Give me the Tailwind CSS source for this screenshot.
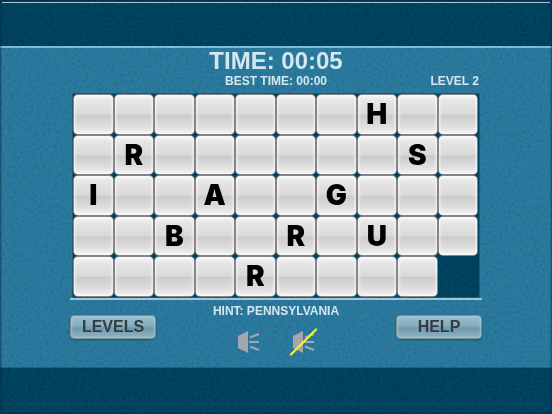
<!DOCTYPE html>
<html lang="en">
<head>
    <meta charset="UTF-8">
    <meta name="viewport" content="width=device-width, initial-scale=1.0">
    <title>Word Slide</title>
    <script src="https://cdn.jsdelivr.net/npm/@tailwindcss/browser@4"></script>
    <style>
        body {
            font-family: 'Liberation Sans', Arial, sans-serif;
        }
        /* Raised key with a darker band across the middle */
        .tile {
            background: linear-gradient(#f4f4f4 0%, #e4e4e4 18%, #d9d9d9 49%, #cbcbcb 53%, #dcdcdc 78%, #f2f2f2 100%);
            box-shadow: inset 0 0 3px 1px rgba(255, 255, 255, 0.8), 0 0 0 1px #858585;
            font-family: 'Inter', 'Open Sans', sans-serif;
        }
        .key {
            background: linear-gradient(#9bbfcd 0%, #86adbd 45%, #7199ab 55%, #8db5c5 100%);
            box-shadow: inset 0 0 2px 1px rgba(190, 220, 230, 0.5), 0 1px 2px rgba(0, 40, 60, 0.4);
        }
    </style>
</head>

<body class="relative min-h-screen flex flex-col bg-[#27759a] text-[#d3e6ef] font-bold">
    <header class="h-12 shrink-0 bg-[#003f5c] border-b-2 border-[#80b9cf] pt-[2px]">
        <div class="h-px mx-[2px] bg-[#b4cdd9]"></div>
    </header>

    <main class="grow w-full max-w-[412px] mx-auto flex flex-col">
        <h1 class="text-center text-[24px] leading-[26px]">TIME: 00:05</h1>
        <div class="grid grid-cols-[1fr_auto_1fr] px-[3px] text-[12px] leading-[14px]">
            <p class="col-start-2">BEST TIME: 00:00</p>
            <p class="text-right">LEVEL 2</p>
        </div>

        <div class="mt-[5px] mx-[2px] p-px pr-[2px] bg-[#003f5c] border border-[#2b5568]">
            <div id="board" class="grid grid-cols-10 gap-[2px] leading-none text-black"></div>
        </div>
        <div class="h-[2px] bg-[#9ac8da]"></div>

        <div class="flex justify-between">
            <button class="key relative z-10 mt-[15px] h-6 w-[86px] rounded-[4px] border border-[#7d8d94] text-[16px] leading-[22px] text-[#333c41]">LEVELS</button>
            <div class="pt-[4px] text-center">
                <p class="text-[12px] leading-[14px]">HINT: PENNSYLVANIA</p>
                <div class="mt-[10px] flex justify-center gap-[26px]">
                    <button class="relative z-10" aria-label="Sound on">
                        <svg class="block" width="28" height="28" viewBox="0 0 28 28">
                            <path d="M3 8 L13 3 V25 L3 20 Z" fill="#a3a6ae"/>
                            <path d="M15 9.5 L24 6 M14 14 H24 M15 18.5 L24 22" stroke="#a3a6ae" stroke-width="2"/>
                        </svg>
                    </button>
                    <button class="relative z-10" aria-label="Sound off">
                        <svg class="block" width="28" height="28" viewBox="0 0 28 28">
                            <path d="M4 8 L14 3 V25 L4 20 Z" fill="#a3a6ae"/>
                            <path d="M16 9.5 L25 6 M15 14 H25 M16 18.5 L25 22" stroke="#a3a6ae" stroke-width="2"/>
                            <path d="M2 26.5 L27 1.5" stroke="#fff31c" stroke-width="2.2" stroke-linecap="round"/>
                        </svg>
                    </button>
                </div>
            </div>
            <button class="key relative z-10 mt-[15px] h-6 w-[86px] rounded-[4px] border border-[#7d8d94] text-[16px] leading-[22px] text-[#333c41]">HELP</button>
        </div>
    </main>

    <footer class="h-[47px] shrink-0 bg-[#003f5c] border-t border-[#1b5f80]"></footer>

    <!-- Felt texture and the dark rim over the whole screen -->
    <svg class="absolute inset-0 w-full h-full pointer-events-none opacity-10 mix-blend-soft-light" aria-hidden="true">
        <filter id="grain" x="0" y="0" width="100%" height="100%">
            <feTurbulence type="fractalNoise" baseFrequency="0.35" numOctaves="2"/>
            <feColorMatrix values="2.5 0 0 0 -0.75  2.5 0 0 0 -0.75  2.5 0 0 0 -0.75  0 0 0 0 1"/>
        </filter>
        <rect width="100%" height="100%" filter="url(#grain)"/>
    </svg>
    <div class="absolute inset-0 pointer-events-none shadow-[inset_0_0_2px_1px_rgba(0,40,60,0.6)]"></div>

    <script>
        // Spaces are blank tiles, '.' is the open slot
        const rows = [
            '       H  ',
            ' R      S ',
            'I  A  G   ',
            '  B  R U  ',
            '    R    .'
        ];
        const board = document.getElementById('board');

        rows.join('').split('').forEach((letter) => {
            const cell = document.createElement(letter === '.' ? 'div' : 'button');
            cell.className = letter === '.'
                ? 'aspect-square'
                : 'tile relative z-10 aspect-square flex items-center justify-center rounded-[4px] text-[28px] font-black';
            if (letter !== '.') {
                cell.textContent = letter.trim();
                if (!letter.trim()) cell.setAttribute('aria-label', 'Blank tile');
            }
            board.appendChild(cell);
        });
    </script>
</body>
</html>
